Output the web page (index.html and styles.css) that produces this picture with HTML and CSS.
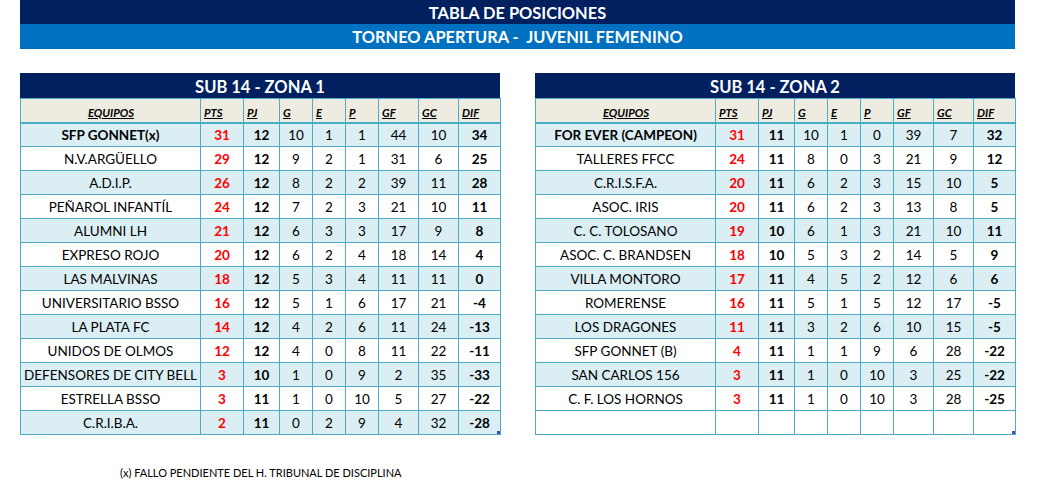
FILE: index.html
```html
<!DOCTYPE html>
<html lang="es">
<head>
<meta charset="utf-8">
<title>Tabla de posiciones</title>
<link rel="stylesheet" href="styles.css">
</head>
<body>
<div class="page">
  <div class="banner">
    <div class="banner-main">TABLA DE POSICIONES</div>
    <div class="banner-sub">TORNEO APERTURA -&nbsp; JUVENIL FEMENINO</div>
  </div>

  <div class="zones">
    <section class="zone">
      <div class="zone-title">SUB 14 - ZONA 1</div>
      <table class="standings">
        <colgroup>
          <col class="c-team"><col class="c-pts"><col class="c-pj"><col class="c-s"><col class="c-s"><col class="c-s"><col class="c-m"><col class="c-m"><col class="c-dif">
        </colgroup>
        <thead>
          <tr><th class="h-team">EQUIPOS</th><th>PTS</th><th>PJ</th><th>G</th><th>E</th><th>P</th><th>GF</th><th>GC</th><th>DIF</th></tr>
        </thead>
        <tbody>
          <tr><td class="team lead">SFP GONNET(x)</td><td class="pts">31</td><td class="b">12</td><td>10</td><td>1</td><td>1</td><td>44</td><td>10</td><td class="b">34</td></tr>
          <tr><td class="team">N.V.ARGÜELLO</td><td class="pts">29</td><td class="b">12</td><td>9</td><td>2</td><td>1</td><td>31</td><td>6</td><td class="b">25</td></tr>
          <tr><td class="team">A.D.I.P.</td><td class="pts">26</td><td class="b">12</td><td>8</td><td>2</td><td>2</td><td>39</td><td>11</td><td class="b">28</td></tr>
          <tr><td class="team">PEÑAROL INFANTÍL</td><td class="pts">24</td><td class="b">12</td><td>7</td><td>2</td><td>3</td><td>21</td><td>10</td><td class="b">11</td></tr>
          <tr><td class="team">ALUMNI LH</td><td class="pts">21</td><td class="b">12</td><td>6</td><td>3</td><td>3</td><td>17</td><td>9</td><td class="b">8</td></tr>
          <tr><td class="team">EXPRESO ROJO</td><td class="pts">20</td><td class="b">12</td><td>6</td><td>2</td><td>4</td><td>18</td><td>14</td><td class="b">4</td></tr>
          <tr><td class="team">LAS MALVINAS</td><td class="pts">18</td><td class="b">12</td><td>5</td><td>3</td><td>4</td><td>11</td><td>11</td><td class="b">0</td></tr>
          <tr><td class="team">UNIVERSITARIO BSSO</td><td class="pts">16</td><td class="b">12</td><td>5</td><td>1</td><td>6</td><td>17</td><td>21</td><td class="b">-4</td></tr>
          <tr><td class="team">LA PLATA FC</td><td class="pts">14</td><td class="b">12</td><td>4</td><td>2</td><td>6</td><td>11</td><td>24</td><td class="b">-13</td></tr>
          <tr><td class="team">UNIDOS DE OLMOS</td><td class="pts">12</td><td class="b">12</td><td>4</td><td>0</td><td>8</td><td>11</td><td>22</td><td class="b">-11</td></tr>
          <tr><td class="team">DEFENSORES DE CITY BELL</td><td class="pts">3</td><td class="b">10</td><td>1</td><td>0</td><td>9</td><td>2</td><td>35</td><td class="b">-33</td></tr>
          <tr><td class="team">ESTRELLA BSSO</td><td class="pts">3</td><td class="b">11</td><td>1</td><td>0</td><td>10</td><td>5</td><td>27</td><td class="b">-22</td></tr>
          <tr><td class="team">C.R.I.B.A.</td><td class="pts">2</td><td class="b">11</td><td>0</td><td>2</td><td>9</td><td>4</td><td>32</td><td class="b last">-28<span class="handle"></span></td></tr>
        </tbody>
      </table>
    </section>

    <section class="zone">
      <div class="zone-title">SUB 14 - ZONA 2</div>
      <table class="standings">
        <colgroup>
          <col class="c-team"><col class="c-pts"><col class="c-pj"><col class="c-s"><col class="c-s"><col class="c-s"><col class="c-m"><col class="c-m"><col class="c-dif">
        </colgroup>
        <thead>
          <tr><th class="h-team">EQUIPOS</th><th>PTS</th><th>PJ</th><th>G</th><th>E</th><th>P</th><th>GF</th><th>GC</th><th>DIF</th></tr>
        </thead>
        <tbody>
          <tr><td class="team lead">FOR EVER (CAMPEON)</td><td class="pts">31</td><td class="b">11</td><td>10</td><td>1</td><td>0</td><td>39</td><td>7</td><td class="b">32</td></tr>
          <tr><td class="team">TALLERES FFCC</td><td class="pts">24</td><td class="b">11</td><td>8</td><td>0</td><td>3</td><td>21</td><td>9</td><td class="b">12</td></tr>
          <tr><td class="team">C.R.I.S.F.A.</td><td class="pts">20</td><td class="b">11</td><td>6</td><td>2</td><td>3</td><td>15</td><td>10</td><td class="b">5</td></tr>
          <tr><td class="team">ASOC. IRIS</td><td class="pts">20</td><td class="b">11</td><td>6</td><td>2</td><td>3</td><td>13</td><td>8</td><td class="b">5</td></tr>
          <tr><td class="team">C. C. TOLOSANO</td><td class="pts">19</td><td class="b">10</td><td>6</td><td>1</td><td>3</td><td>21</td><td>10</td><td class="b">11</td></tr>
          <tr><td class="team">ASOC. C. BRANDSEN</td><td class="pts">18</td><td class="b">10</td><td>5</td><td>3</td><td>2</td><td>14</td><td>5</td><td class="b">9</td></tr>
          <tr><td class="team">VILLA MONTORO</td><td class="pts">17</td><td class="b">11</td><td>4</td><td>5</td><td>2</td><td>12</td><td>6</td><td class="b">6</td></tr>
          <tr><td class="team">ROMERENSE</td><td class="pts">16</td><td class="b">11</td><td>5</td><td>1</td><td>5</td><td>12</td><td>17</td><td class="b">-5</td></tr>
          <tr><td class="team">LOS DRAGONES</td><td class="pts">11</td><td class="b">11</td><td>3</td><td>2</td><td>6</td><td>10</td><td>15</td><td class="b">-5</td></tr>
          <tr><td class="team">SFP GONNET (B)</td><td class="pts">4</td><td class="b">11</td><td>1</td><td>1</td><td>9</td><td>6</td><td>28</td><td class="b">-22</td></tr>
          <tr><td class="team">SAN CARLOS 156</td><td class="pts">3</td><td class="b">11</td><td>1</td><td>0</td><td>10</td><td>3</td><td>25</td><td class="b">-22</td></tr>
          <tr><td class="team">C. F. LOS HORNOS</td><td class="pts">3</td><td class="b">11</td><td>1</td><td>0</td><td>10</td><td>3</td><td>28</td><td class="b">-25</td></tr>
          <tr class="blank"><td></td><td></td><td></td><td></td><td></td><td></td><td></td><td></td><td class="last"><span class="handle"></span></td></tr>
        </tbody>
      </table>
    </section>
  </div>

  <p class="note">(x) FALLO PENDIENTE DEL H. TRIBUNAL DE DISCIPLINA</p>
</div>
</body>
</html>
```

FILE: styles.css
```css
* { box-sizing: border-box; }

body {
  margin: 0;
  background: #ffffff;
  font-family: Lato, "Open Sans", "Liberation Sans", sans-serif;
  color: #000000;
}

.page {
  width: 1037px;
  padding: 0 22px 0 20px;
}

.banner {
  display: flex;
  flex-direction: column;
}

.banner-main,
.banner-sub {
  color: #ffffff;
  font-weight: 700;
  font-size: 16.4px;
  text-align: center;
}

.banner-main {
  background: #002060;
  height: 24px;
  line-height: 26px;
}

.banner-sub {
  background: #0070c0;
  height: 25px;
  line-height: 26px;
}

.zones {
  display: flex;
  gap: 35px;
  margin-top: 24px;
}

.zone {
  width: 480px;
}

.zone-title {
  background: #002060;
  color: #ffffff;
  font-weight: 700;
  font-size: 16.5px;
  text-align: center;
  height: 25px;
  line-height: 29px;
}

.standings {
  width: 480px;
  table-layout: fixed;
  border-collapse: collapse;
  font-size: 13.5px;
}

.c-team { width: 180px; }
.c-pts { width: 43px; }
.c-pj { width: 36px; }
.c-s { width: 33px; }
.c-m { width: 40px; }
.c-dif { width: 42px; }

.standings th,
.standings td {
  border: 1px solid #4bacc6;
  padding: 0;
  height: 24px;
}

.standings th {
  background: #eeece1;
  font-size: 11.3px;
  font-style: italic;
  font-weight: 700;
  text-decoration: underline;
  text-align: left;
  vertical-align: bottom;
  padding: 0 2px 3px 3px;
  border-bottom: 2px solid #4bacc6;
  color: #000000;
}

.standings th.h-team {
  text-align: center;
}

.standings td {
  text-align: center;
  vertical-align: middle;
  line-height: 21px;
  padding-top: 1px;
  white-space: nowrap;
}

.standings tbody tr:nth-child(odd) td {
  background: #daeef3;
}

.standings tbody tr.blank td {
  background: #ffffff;
}

.team.lead { font-weight: 700; }

.pts {
  color: #ff0000;
  font-weight: 700;
}

.b { font-weight: 700; }

.last { position: relative; }

.handle {
  position: absolute;
  right: 0;
  bottom: 0;
  width: 3px;
  height: 3px;
  background: #4a4fb8;
}

.note {
  margin: 31px 0 0 100px;
  font-size: 11px;
  line-height: 14px;
}
```
